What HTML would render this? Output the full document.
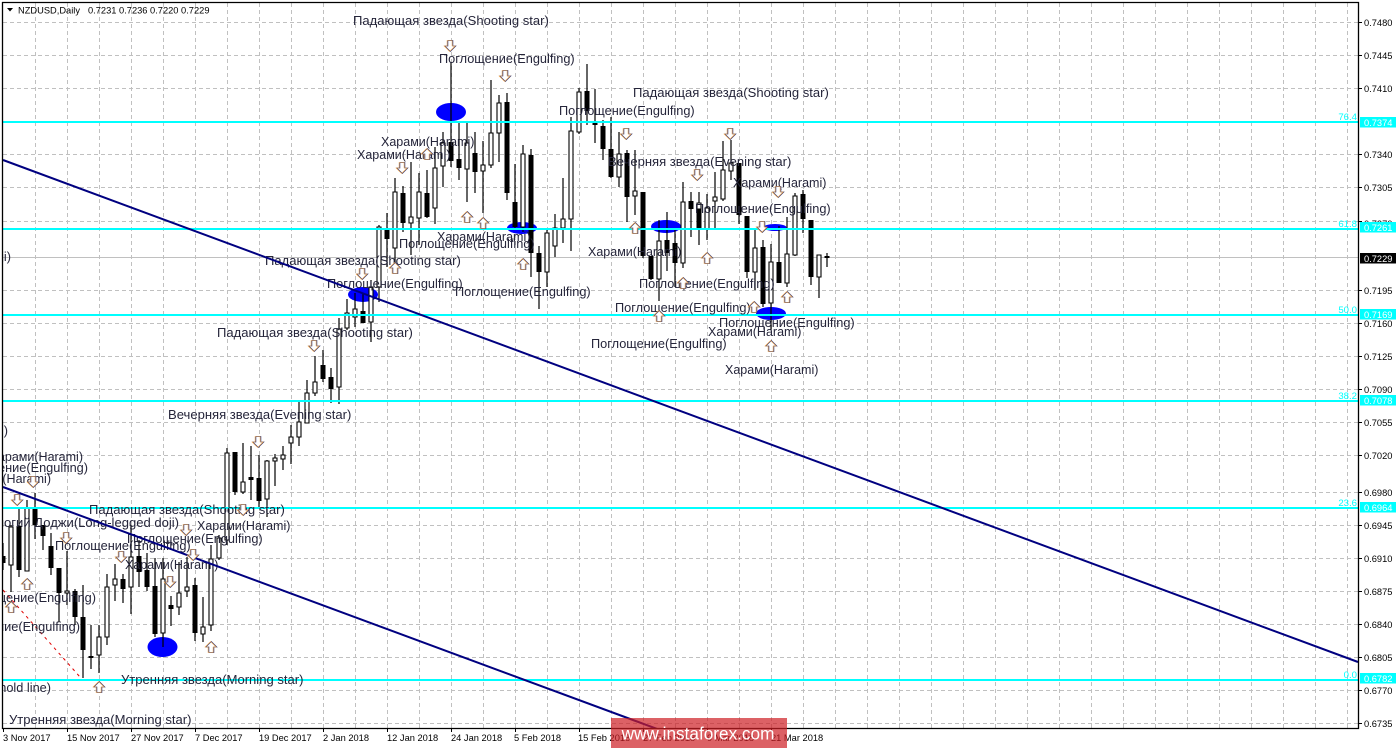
<!DOCTYPE html>
<html><head><meta charset="utf-8"><title>NZDUSD,Daily</title>
<style>
html,body{margin:0;padding:0;background:#fff;width:1398px;height:749px;overflow:hidden}
svg{display:block;font-family:"Liberation Sans","Noto Sans CJK SC",sans-serif}
.p text{font-size:12.75px;fill:#25253a}
.p text.s{font-size:13.05px}
.p text.h{font-size:12.5px}
.a text{font-size:9.3px;fill:#000}
.t text{font-size:9.3px;fill:#fff}
.l text{font-size:9.6px;fill:#00ffff;text-anchor:end}
</style></head><body>
<svg width="1398" height="749" viewBox="0 0 1398 749" xmlns="http://www.w3.org/2000/svg">
<defs>
<clipPath id="c"><rect x="3" y="3" width="1355" height="725"/></clipPath>
<g id="ad" fill="#fff"><path d="M3 -5.500H8V0H11L5.500 5.500 0 0H3Z" stroke="#2a3478" stroke-width=".7" transform="translate(-5.100 0)"/><path d="M3 -5.500H8V0H11L5.500 5.500 0 0H3Z" stroke="#f0a040" stroke-width=".6" fill="none" transform="translate(-5.900 0)"/></g>
<g id="au" fill="#fff"><path d="M3 5.500H8V0H11L5.500 -5.500 0 0H3Z" stroke="#2a3478" stroke-width=".7" transform="translate(-5.100 0)"/><path d="M3 5.500H8V0H11L5.500 -5.500 0 0H3Z" stroke="#f0a040" stroke-width=".6" fill="none" transform="translate(-5.900 0)"/></g>
</defs>
<rect width="1398" height="749" fill="#fff"/>
<g fill="none" stroke="#c0c0c0" stroke-width="1" stroke-dasharray="4 3">
<path d="M3 22.500H1358M3 55.500H1358M3 88.500H1358M3 121.500H1358M3 154.500H1358M3 187.500H1358M3 221.500H1358M3 290.500H1358M3 323.500H1358M3 356.500H1358M3 389.500H1358M3 422.500H1358M3 455.500H1358M3 492.500H1358M3 525.500H1358M3 558.500H1358M3 591.500H1358M3 624.500H1358M3 657.500H1358M3 690.500H1358M3 723.500H1358"/>
<path d="M35.500 3V728M67.500 3V728M99.500 3V728M131.500 3V728M163.500 3V728M195.500 3V728M227.500 3V728M259.500 3V728M291.500 3V728M323.500 3V728M355.500 3V728M387.500 3V728M419.500 3V728M451.500 3V728M483.500 3V728M515.500 3V728M547.500 3V728M579.500 3V728M611.500 3V728M643.500 3V728M675.500 3V728M707.500 3V728M739.500 3V728M771.500 3V728M803.500 3V728M835.500 3V728M867.500 3V728M899.500 3V728M931.500 3V728M963.500 3V728M995.500 3V728M1027.500 3V728M1059.500 3V728M1091.500 3V728M1123.500 3V728M1155.500 3V728M1187.500 3V728M1219.500 3V728M1251.500 3V728M1283.500 3V728M1315.500 3V728M1347.500 3V728"/>
</g>
<path d="M3 257.500H1358" stroke="#c0c0c0" stroke-width="1"/>
<path d="M3 590L80 677" stroke="#e00000" stroke-width="1" stroke-dasharray="3 4" fill="none"/>
<g fill="#0000ff">
<ellipse cx="451" cy="112" rx="15" ry="9"/>
<ellipse cx="162.500" cy="647" rx="15" ry="10"/>
<ellipse cx="363" cy="294.500" rx="15" ry="7.500"/>
<ellipse cx="522" cy="228" rx="15" ry="6"/>
<ellipse cx="666" cy="226.500" rx="15" ry="6.500"/>
<ellipse cx="775" cy="227.500" rx="11.500" ry="3.500"/>
<ellipse cx="771" cy="313.500" rx="15" ry="6.500"/>
</g>
<g clip-path="url(#c)">
<path stroke="#000" stroke-width="1.200" fill="none" d="M3 543V570M11 525V592M19 508V577M27 500V571M35 493V539M43 525V550M51 533V575M59 568V622M67 551V605M75 589V625M83 585V678M91 625V669M99 625V673M107 574V645M115 564V601M123 574V603M131 525V614M139 540V587M147 553V591M155 558V637M163 558V647M171 596V626M179 562V615M187 557V597M195 578V641M203 597V642M211 545V631M219 535V560M227 448V545M235 452V495M243 443V494M251 446V500M259 455V508M267 460V517M275 454V486M283 446V470M291 425V464M299 402V446M307 380V423M315 356V396M323 350V382M331 368V403M339 318V404M347 299V330M355 293V327M363 293V323M371 280V342M379 225V302M387 213V267M395 178V267M403 186V232M411 162V255M419 173V245M427 170V218M435 147V224M443 132V187M451 62V167M459 123V180M467 123V202M475 132V193M483 141V213M491 80V168M499 95V162M507 93V200M515 164V230M523 145V232M531 149V277M539 246V309M547 230V287M555 214V257M563 178V243M571 117V251M579 88V134M587 64V125M595 89V143M603 120V160M611 117V178M619 132V187M627 150V222M635 150V215M643 192V258M651 256V280M659 220V301M667 212V271M675 228V287M683 182V268M691 192V237M699 192V245M707 194V240M715 172V229M723 141V201M731 140V180M739 163V224M747 216V278M755 230V290M763 240V307M771 244V330M779 226V283M787 217V287M795 193V256M803 190V233M811 220V285M819 255V298M827 253V267"/>
<path fill="#000" stroke="none" d="M0.500 556h5V563h-5zM16.500 526h5V570h-5zM32.500 509h5V525h-5zM40.500 525h5V536h-5zM48.500 546h5V568h-5zM56.500 568h5V593h-5zM72.500 591h5V617h-5zM80.500 617h5V650h-5zM88.500 656h5V658h-5zM120.500 579h5V589h-5zM136.500 556h5V572h-5zM144.500 570h5V587h-5zM152.500 586h5V634h-5zM168.500 605h5V609h-5zM192.500 585h5V633h-5zM232.500 452h5V492h-5zM248.500 477h5V480h-5zM256.500 478h5V501h-5zM320.500 365h5V379h-5zM328.500 377h5V389h-5zM360.500 311h5V323h-5zM384.500 228h5V239h-5zM400.500 193h5V223h-5zM424.500 193h5V217h-5zM448.500 142h5V161h-5zM456.500 159h5V168h-5zM472.500 153h5V172h-5zM504.500 102h5V193h-5zM512.500 202h5V227h-5zM528.500 155h5V253h-5zM536.500 253h5V272h-5zM584.500 91h5V111h-5zM592.500 121h5V125h-5zM600.500 126h5V149h-5zM608.500 149h5V177h-5zM624.500 153h5V197h-5zM640.500 192h5V256h-5zM648.500 256h5V279h-5zM664.500 240h5V253h-5zM672.500 243h5V263h-5zM688.500 201h5V209h-5zM696.500 209h5V228h-5zM736.500 163h5V215h-5zM744.500 216h5V272h-5zM760.500 247h5V304h-5zM776.500 262h5V283h-5zM800.500 194h5V219h-5zM808.500 220h5V277h-5zM824.500 256h5V258h-5z"/>
<path fill="#fff" stroke="#000" stroke-width="1.100" d="M9 527h4V565h-4zM25 508h4V571h-4zM65 591h4V593h-4zM97 637h4V655h-4zM105 587h4V637h-4zM113 579h4V585h-4zM129 557h4V587h-4zM161 579h4V633h-4zM177 593h4V607h-4zM185 587h4V591h-4zM201 627h4V634h-4zM209 559h4V625h-4zM217 538h4V558h-4zM225 453h4V540h-4zM241 482h4V492h-4zM265 461h4V499h-4zM273 458h4V461h-4zM281 455h4V459h-4zM289 437h4V443h-4zM297 422h4V437h-4zM305 393h4V423h-4zM313 382h4V393h-4zM337 329h4V387h-4zM345 313h4V328h-4zM353 309h4V317h-4zM369 287h4V322h-4zM377 227h4V287h-4zM393 192h4V248h-4zM409 217h4V223h-4zM417 192h4V218h-4zM433 168h4V208h-4zM441 143h4V166h-4zM465 143h4V169h-4zM481 165h4V171h-4zM489 133h4V165h-4zM497 103h4V133h-4zM521 154h4V227h-4zM545 233h4V272h-4zM553 228h4V246h-4zM561 219h4V228h-4zM569 131h4V219h-4zM577 92h4V132h-4zM617 154h4V177h-4zM633 191h4V196h-4zM657 241h4V279h-4zM681 202h4V263h-4zM697 203h4V209h-4zM705 208h4V229h-4zM713 197h4V201h-4zM721 170h4V199h-4zM729 163h4V171h-4zM753 248h4V272h-4zM769 262h4V303h-4zM785 254h4V283h-4zM793 196h4V255h-4zM817 255h4V277h-4z"/>
<path d="M3 122H1358M3 229H1358M3 315H1358M3 401H1358M3 508H1358M3 680H1358" stroke="#00ffff" stroke-width="2" fill="none"/>
<g class="p">
<text class="s" x="353" y="25">Падающая звезда(Shooting star)</text>
<text x="439" y="63">Поглощение(Engulfing)</text>
<text class="s" x="633" y="97">Падающая звезда(Shooting star)</text>
<text x="559" y="115">Поглощение(Engulfing)</text>
<text class="h" x="381" y="146">Харами(Harami)</text>
<text class="h" x="357" y="159">Харами(Harami)</text>
<text class="s" x="608" y="166">Вечерняя звезда(Evening star)</text>
<text class="h" x="733" y="187">Харами(Harami)</text>
<text x="695" y="213">Поглощение(Engulfing)</text>
<text class="h" x="437" y="241">Харами(Harami)</text>
<text x="399" y="248">Поглощение(Engulfing)</text>
<text class="h" x="588" y="256">Харами(Harami)</text>
<text class="s" x="265" y="265">Падающая звезда(Shooting star)</text>
<text x="327" y="288">Поглощение(Engulfing)</text>
<text x="639" y="288">Поглощение(Engulfing)</text>
<text x="455" y="296">Поглощение(Engulfing)</text>
<text x="615" y="312">Поглощение(Engulfing)</text>
<text x="719" y="327">Поглощение(Engulfing)</text>
<text class="s" x="217" y="337">Падающая звезда(Shooting star)</text>
<text class="h" x="708" y="336">Харами(Harami)</text>
<text x="591" y="348">Поглощение(Engulfing)</text>
<text class="h" x="725" y="374">Харами(Harami)</text>
<text class="s" x="168" y="419">Вечерняя звезда(Evening star)</text>
<text class="h" x="83" y="461" text-anchor="end">Харами(Harami)</text>
<text x="88" y="472" text-anchor="end">Поглощение(Engulfing)</text>
<text class="h" x="51" y="483" text-anchor="end">Харами(Harami)</text>
<text class="s" x="89" y="514">Падающая звезда(Shooting star)</text>
<text class="s" x="179" y="527" text-anchor="end">Длинноногий Доджи(Long-legged doji)</text>
<text class="h" x="197" y="530">Харами(Harami)</text>
<text x="127" y="543">Поглощение(Engulfing)</text>
<text x="55" y="550">Поглощение(Engulfing)</text>
<text class="h" x="125" y="569">Харами(Harami)</text>
<text x="96" y="602" text-anchor="end">Поглощение(Engulfing)</text>
<text x="80" y="631" text-anchor="end">Поглощение(Engulfing)</text>
<text class="s" x="121" y="684">Утренняя звезда(Morning star)</text>
<text x="51" y="692" text-anchor="end">Линия(Threshold line)</text>
<text class="s" x="9" y="724">Утренняя звезда(Morning star)</text>
<text x="11" y="261" text-anchor="end">(doji)</text>
<text x="8" y="435" text-anchor="end">)</text>
</g>
<path d="M3 487L660 730M3 160L1358 662" stroke="#000080" stroke-width="2" fill="none"/>
<g>
<use href="#ad" x="450" y="46"/><use href="#ad" x="505" y="76"/><use href="#ad" x="402" y="168"/><use href="#ad" x="362" y="274"/><use href="#ad" x="626" y="134"/><use href="#ad" x="314" y="346"/><use href="#ad" x="258" y="442"/><use href="#ad" x="730" y="134"/><use href="#ad" x="697" y="175"/><use href="#ad" x="778" y="192"/><use href="#ad" x="762" y="227"/><use href="#ad" x="17" y="500"/><use href="#ad" x="33" y="482"/><use href="#ad" x="66" y="538"/><use href="#ad" x="121" y="557"/><use href="#ad" x="170" y="582"/><use href="#ad" x="186" y="530"/><use href="#ad" x="193" y="555"/><use href="#ad" x="243" y="510"/>
<use href="#au" x="27" y="584"/><use href="#au" x="11" y="607"/><use href="#au" x="211" y="647"/><use href="#au" x="99" y="687"/><use href="#au" x="395" y="268"/><use href="#au" x="467" y="217"/><use href="#au" x="483" y="223"/><use href="#au" x="523" y="264"/><use href="#au" x="635" y="228"/><use href="#au" x="707" y="258"/><use href="#au" x="787" y="297"/><use href="#au" x="771" y="346"/><use href="#au" x="754" y="307"/><use href="#au" x="683" y="283"/><use href="#au" x="659" y="316"/><use href="#au" x="427" y="154"/>
</g>
<g class="l">
<text x="1357" y="120">76.4</text><text x="1357" y="227">61.8</text><text x="1357" y="313">50.0</text><text x="1357" y="399">38.2</text><text x="1357" y="506">23.6</text><text x="1357" y="678">0.0</text>
</g>
</g>
<path d="M2.500 2V728.500H1358.500V2.500H2" fill="none" stroke="#000" stroke-width="1.300"/>
<path stroke="#000" stroke-width="1" fill="none" d="M1358 22.500h4M1358 55.500h4M1358 88.500h4M1358 154.500h4M1358 187.500h4M1358 221.500h4M1358 290.500h4M1358 323.500h4M1358 356.500h4M1358 389.500h4M1358 422.500h4M1358 455.500h4M1358 492.500h4M1358 525.500h4M1358 558.500h4M1358 591.500h4M1358 624.500h4M1358 657.500h4M1358 690.500h4M1358 723.500h4M3.500 728v4M67.500 728v4M131.500 728v4M195.500 728v4M259.500 728v4M323.500 728v4M387.500 728v4M451.500 728v4M515.500 728v4M579.500 728v4M643.500 728v4M707.500 728v4M771.500 728v4"/>
<path d="M7 8h6l-3 3.500z" fill="#000"/>
<g class="a">
<text x="18" y="13.500">NZDUSD,Daily</text><text x="88" y="13.500">0.7231 0.7236 0.7220 0.7229</text>
<text x="1364" y="26">0.7480</text><text x="1364" y="59">0.7445</text><text x="1364" y="92">0.7410</text><text x="1364" y="158">0.7340</text><text x="1364" y="191">0.7305</text><text x="1364" y="227">0.7270</text><text x="1364" y="294">0.7195</text><text x="1364" y="327">0.7160</text><text x="1364" y="360">0.7125</text><text x="1364" y="393">0.7090</text><text x="1364" y="426">0.7055</text><text x="1364" y="459">0.7020</text><text x="1364" y="496">0.6980</text><text x="1364" y="529">0.6945</text><text x="1364" y="562">0.6910</text><text x="1364" y="595">0.6875</text><text x="1364" y="628">0.6840</text><text x="1364" y="661">0.6805</text><text x="1364" y="694">0.6770</text><text x="1364" y="727">0.6735</text>
<text x="3" y="741">3 Nov 2017</text><text x="67" y="741">15 Nov 2017</text><text x="131" y="741">27 Nov 2017</text><text x="195" y="741">7 Dec 2017</text><text x="259" y="741">19 Dec 2017</text><text x="323" y="741">2 Jan 2018</text><text x="387" y="741">12 Jan 2018</text><text x="451" y="741">24 Jan 2018</text><text x="514" y="741">5 Feb 2018</text><text x="578" y="741">15 Feb 2018</text><text x="643" y="741">27 Feb 2018</text><text x="707" y="741">9 Mar 2018</text><text x="771" y="741">21 Mar 2018</text>
</g>
<rect x="1360" y="117" width="36" height="10.500" fill="#00ffff"/>
<rect x="1360" y="222" width="36" height="10.500" fill="#00ffff"/>
<rect x="1360" y="253" width="36" height="10.500" fill="#000"/>
<rect x="1360" y="309" width="36" height="10.500" fill="#00ffff"/>
<rect x="1360" y="395" width="36" height="10.500" fill="#00ffff"/>
<rect x="1360" y="502" width="36" height="10.500" fill="#00ffff"/>
<rect x="1360" y="673" width="36" height="10.500" fill="#00ffff"/>
<g class="t">
<text x="1364" y="126">0.7374</text><text x="1364" y="231">0.7261</text><text x="1364" y="262">0.7229</text><text x="1364" y="318">0.7169</text><text x="1364" y="404">0.7078</text><text x="1364" y="511">0.6964</text><text x="1364" y="682">0.6782</text>
</g>
<rect x="611" y="718" width="176" height="30" fill="#cd1e23" fill-opacity=".7"/>
<text x="698" y="739.500" text-anchor="middle" font-size="17.200" fill="#fff">www.instaforex.com</text>
</svg>
</body></html>
